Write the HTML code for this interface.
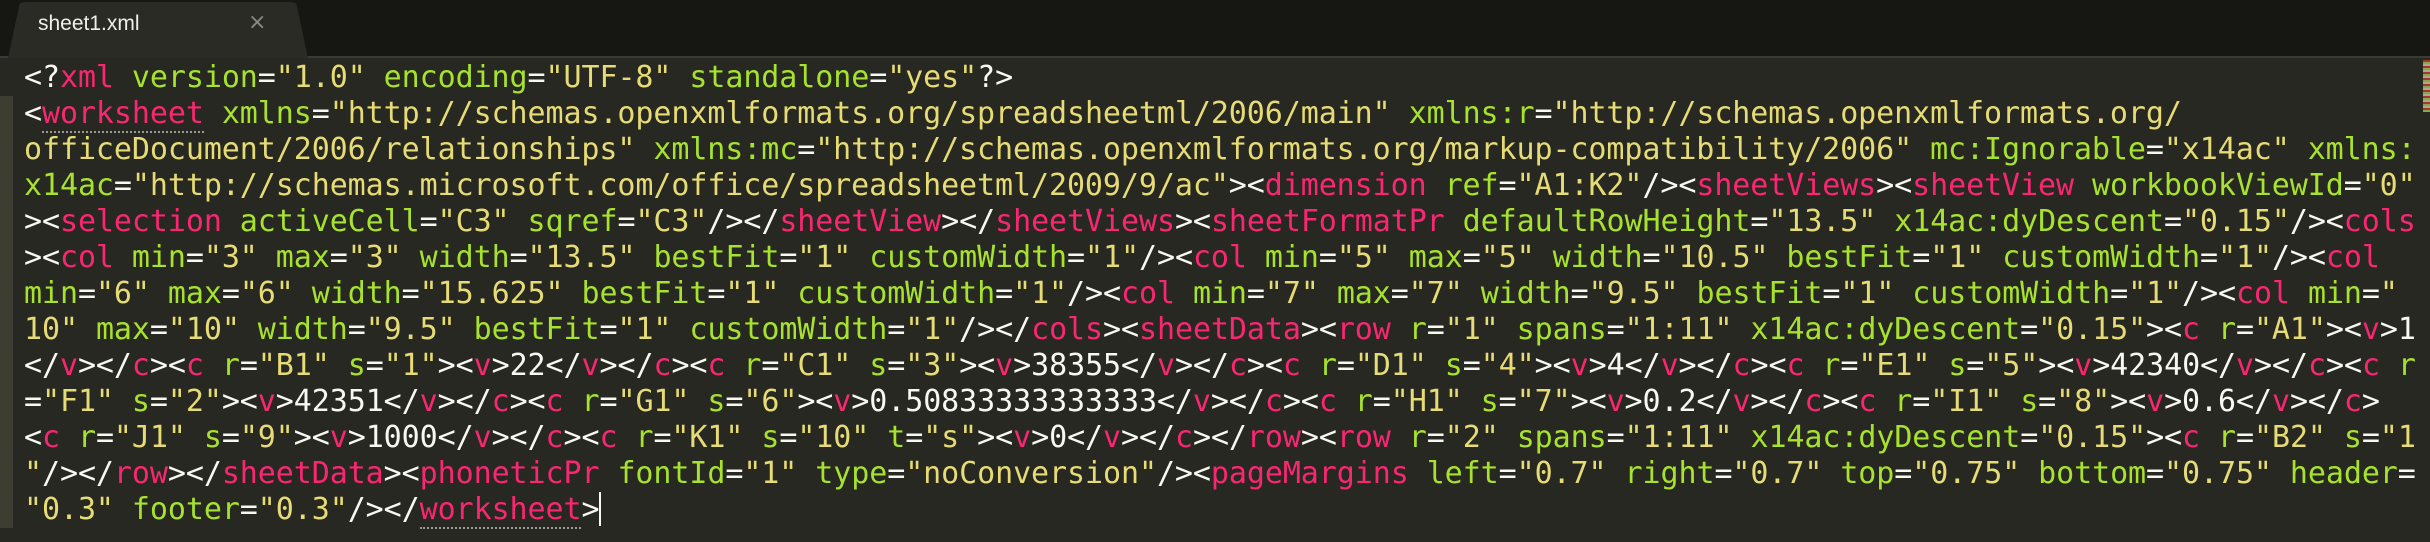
<!DOCTYPE html>
<html><head><meta charset="utf-8"><style>
html,body{margin:0;padding:0;width:2430px;height:542px;overflow:hidden;background:#272822}
#bar{position:absolute;left:0;top:0;width:2430px;height:56px;background:#161612;border-bottom:2px solid #3a3a34}
#tab{position:absolute;left:8px;top:2px;width:300px;height:56px;background:#2a2b25;border-radius:18px 18px 0 0;clip-path:polygon(4% 0,96% 0,100% 100%,0 100%)}
#tabt{position:absolute;left:38px;top:12px;font:21px "Liberation Sans","DejaVu Sans",sans-serif;color:#f0f0ea}
#x{position:absolute;left:248px;top:10px;font:22px "DejaVu Sans",sans-serif;color:#8a8a84}
#gut{position:absolute;left:0;top:96px;width:13px;height:432px;background:#3e3d32}
#code{position:absolute;left:24px;top:60px;margin:0;font:30px "DejaVu Sans Mono","Liberation Mono",monospace;line-height:36px;color:#f8f8f2;white-space:pre;letter-spacing:-0.08px}
i{font-style:normal;color:#f92672}
b{font-weight:normal;color:#a6e22e}
u{text-decoration:none;color:#e6db74}
.ul{border-bottom:2px dotted #9a9a90}
.cur{display:inline-block;width:2px;height:34px;background:#f8f8f0;vertical-align:-7px}
#mm{position:absolute;left:2423px;top:60px;width:7px;height:52px;background:repeating-linear-gradient(#a33 0 2px,#8a4 2px 4px,#aa8 4px 6px)}
</style></head><body>
<div id="bar"></div><div id="tab"></div><div id="tabt">sheet1.xml</div><div id="x">×</div>
<div id="gut"></div><div id="mm"></div>
<pre id="code">&lt;?<i>xml</i> <b>version</b>=<u>"1.0"</u> <b>encoding</b>=<u>"UTF-8"</u> <b>standalone</b>=<u>"yes"</u>?&gt;
&lt;<i class="ul">worksheet</i> <b>xmlns</b>=<u>"http://schemas.openxmlformats.org/spreadsheetml/2006/main"</u> <b>xmlns:r</b>=<u>"http://schemas.openxmlformats.org/</u>
<u>officeDocument/2006/relationships"</u> <b>xmlns:mc</b>=<u>"http://schemas.openxmlformats.org/markup-compatibility/2006"</u> <b>mc:Ignorable</b>=<u>"x14ac"</u> <b>xmlns:</b>
<b>x14ac</b>=<u>"http://schemas.microsoft.com/office/spreadsheetml/2009/9/ac"</u>&gt;&lt;<i>dimension</i> <b>ref</b>=<u>"A1:K2"</u>/&gt;&lt;<i>sheetViews</i>&gt;&lt;<i>sheetView</i> <b>workbookViewId</b>=<u>"0"</u>
&gt;&lt;<i>selection</i> <b>activeCell</b>=<u>"C3"</u> <b>sqref</b>=<u>"C3"</u>/&gt;&lt;/<i>sheetView</i>&gt;&lt;/<i>sheetViews</i>&gt;&lt;<i>sheetFormatPr</i> <b>defaultRowHeight</b>=<u>"13.5"</u> <b>x14ac:dyDescent</b>=<u>"0.15"</u>/&gt;&lt;<i>cols</i>
&gt;&lt;<i>col</i> <b>min</b>=<u>"3"</u> <b>max</b>=<u>"3"</u> <b>width</b>=<u>"13.5"</u> <b>bestFit</b>=<u>"1"</u> <b>customWidth</b>=<u>"1"</u>/&gt;&lt;<i>col</i> <b>min</b>=<u>"5"</u> <b>max</b>=<u>"5"</u> <b>width</b>=<u>"10.5"</u> <b>bestFit</b>=<u>"1"</u> <b>customWidth</b>=<u>"1"</u>/&gt;&lt;<i>col</i>
<b>min</b>=<u>"6"</u> <b>max</b>=<u>"6"</u> <b>width</b>=<u>"15.625"</u> <b>bestFit</b>=<u>"1"</u> <b>customWidth</b>=<u>"1"</u>/&gt;&lt;<i>col</i> <b>min</b>=<u>"7"</u> <b>max</b>=<u>"7"</u> <b>width</b>=<u>"9.5"</u> <b>bestFit</b>=<u>"1"</u> <b>customWidth</b>=<u>"1"</u>/&gt;&lt;<i>col</i> <b>min</b>=<u>"</u>
<u>10"</u> <b>max</b>=<u>"10"</u> <b>width</b>=<u>"9.5"</u> <b>bestFit</b>=<u>"1"</u> <b>customWidth</b>=<u>"1"</u>/&gt;&lt;/<i>cols</i>&gt;&lt;<i>sheetData</i>&gt;&lt;<i>row</i> <b>r</b>=<u>"1"</u> <b>spans</b>=<u>"1:11"</u> <b>x14ac:dyDescent</b>=<u>"0.15"</u>&gt;&lt;<i>c</i> <b>r</b>=<u>"A1"</u>&gt;&lt;<i>v</i>&gt;1
&lt;/<i>v</i>&gt;&lt;/<i>c</i>&gt;&lt;<i>c</i> <b>r</b>=<u>"B1"</u> <b>s</b>=<u>"1"</u>&gt;&lt;<i>v</i>&gt;22&lt;/<i>v</i>&gt;&lt;/<i>c</i>&gt;&lt;<i>c</i> <b>r</b>=<u>"C1"</u> <b>s</b>=<u>"3"</u>&gt;&lt;<i>v</i>&gt;38355&lt;/<i>v</i>&gt;&lt;/<i>c</i>&gt;&lt;<i>c</i> <b>r</b>=<u>"D1"</u> <b>s</b>=<u>"4"</u>&gt;&lt;<i>v</i>&gt;4&lt;/<i>v</i>&gt;&lt;/<i>c</i>&gt;&lt;<i>c</i> <b>r</b>=<u>"E1"</u> <b>s</b>=<u>"5"</u>&gt;&lt;<i>v</i>&gt;42340&lt;/<i>v</i>&gt;&lt;/<i>c</i>&gt;&lt;<i>c</i> <b>r</b>
=<u>"F1"</u> <b>s</b>=<u>"2"</u>&gt;&lt;<i>v</i>&gt;42351&lt;/<i>v</i>&gt;&lt;/<i>c</i>&gt;&lt;<i>c</i> <b>r</b>=<u>"G1"</u> <b>s</b>=<u>"6"</u>&gt;&lt;<i>v</i>&gt;0.50833333333333&lt;/<i>v</i>&gt;&lt;/<i>c</i>&gt;&lt;<i>c</i> <b>r</b>=<u>"H1"</u> <b>s</b>=<u>"7"</u>&gt;&lt;<i>v</i>&gt;0.2&lt;/<i>v</i>&gt;&lt;/<i>c</i>&gt;&lt;<i>c</i> <b>r</b>=<u>"I1"</u> <b>s</b>=<u>"8"</u>&gt;&lt;<i>v</i>&gt;0.6&lt;/<i>v</i>&gt;&lt;/<i>c</i>&gt;
&lt;<i>c</i> <b>r</b>=<u>"J1"</u> <b>s</b>=<u>"9"</u>&gt;&lt;<i>v</i>&gt;1000&lt;/<i>v</i>&gt;&lt;/<i>c</i>&gt;&lt;<i>c</i> <b>r</b>=<u>"K1"</u> <b>s</b>=<u>"10"</u> <b>t</b>=<u>"s"</u>&gt;&lt;<i>v</i>&gt;0&lt;/<i>v</i>&gt;&lt;/<i>c</i>&gt;&lt;/<i>row</i>&gt;&lt;<i>row</i> <b>r</b>=<u>"2"</u> <b>spans</b>=<u>"1:11"</u> <b>x14ac:dyDescent</b>=<u>"0.15"</u>&gt;&lt;<i>c</i> <b>r</b>=<u>"B2"</u> <b>s</b>=<u>"1</u>
<u>"</u>/&gt;&lt;/<i>row</i>&gt;&lt;/<i>sheetData</i>&gt;&lt;<i>phoneticPr</i> <b>fontId</b>=<u>"1"</u> <b>type</b>=<u>"noConversion"</u>/&gt;&lt;<i>pageMargins</i> <b>left</b>=<u>"0.7"</u> <b>right</b>=<u>"0.7"</u> <b>top</b>=<u>"0.75"</u> <b>bottom</b>=<u>"0.75"</u> <b>header</b>=
<u>"0.3"</u> <b>footer</b>=<u>"0.3"</u>/&gt;&lt;/<i class="ul">worksheet</i>&gt;<span class="cur"></span></pre>
</body></html>
